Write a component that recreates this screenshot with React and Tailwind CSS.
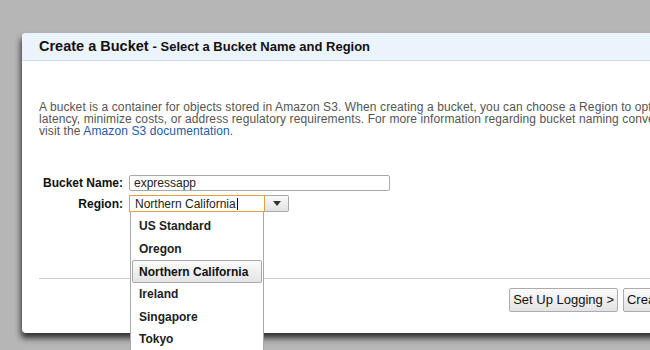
import React from 'react';

const regions = ['US Standard', 'Oregon', 'Northern California', 'Ireland', 'Singapore', 'Tokyo'];

// ── Region dropdown ───────────────────────────────────────────────────────────
function RegionList({ selected }) {
  return (
    <div className="absolute left-[1px] top-[17px] w-[134px] h-[160px] bg-white border border-[#a9a9a9] border-t-0 pt-[3px] px-[1px]">
      {regions.map((r) => (
        <div
          key={r}
          className={
            r === selected
              ? 'h-[23px] flex items-center pl-[6px] border border-[#a8a8a8] rounded-[2px] bg-gradient-to-b from-[#fbfbfb] to-[#e4e4e4] font-bold text-[#111]'
              : 'h-[22.5px] flex items-center pl-[7px] font-bold text-[#222]'
          }
        >
          {r}
        </div>
      ))}
    </div>
  );
}

function Button({ children }) {
  return (
    <button className="h-[24px] px-[3px] border border-[#acacac] rounded-[2px] bg-gradient-to-b from-[#fbfbfb] to-[#e3e3e3] text-[13px] text-[#111] whitespace-nowrap">
      {children}
    </button>
  );
}

// ── Root ──────────────────────────────────────────────────────────────────────
export default function App() {
  return (
    <div
      className="w-[650px] h-[350px] overflow-hidden bg-[#b6b6b6] pt-[33px] pl-[22px]"
      style={{ fontFamily: '"Liberation Sans", Arial, sans-serif' }}
    >
      <div className="w-[665px] h-[300px] bg-white rounded-[4px] shadow-[-1px_5px_6px_rgba(0,0,0,0.75)]">
        <div className="h-[28px] flex items-center pl-[17px] bg-[#ebf3fd] border-b border-[#c9dcf2] rounded-t-[4px] font-bold text-[#111] whitespace-nowrap">
          <span className="text-[14.5px]">Create a Bucket</span>
          <span className="text-[13px] ml-[4px]">- Select a Bucket Name and Region</span>
        </div>

        <div className="px-[17px]">
          <p className="mt-[40px] text-[12px] leading-[12px] tracking-[0.1px] text-[#555] whitespace-nowrap">
            A bucket is a container for objects stored in Amazon S3. When creating a bucket, you can choose a Region to optimize for
            <br />
            latency, minimize costs, or address regulatory requirements. For more information regarding bucket naming conventions, please
            <br />
            visit the <span className="text-[#1c5aa6]">Amazon S3 documentation</span>.
          </p>

          <div className="mt-[38px] flex flex-col gap-[4px] text-[12px] leading-none h-[103px]">
            <div className="flex items-center">
              <label className="w-[84px] text-right font-bold text-[#111]">Bucket Name:</label>
              <div className="ml-[6px] w-[261px] h-[16px] border border-[#a9a9a9] rounded-[2px] pl-[4px] flex items-center text-[#222]">
                expressapp
              </div>
            </div>
            <div className="flex items-center">
              <label className="w-[84px] text-right font-bold text-[#111]">Region:</label>
              <div className="ml-[6px] relative flex">
                <div className="w-[136px] h-[17px] border border-[#e5a13c] pl-[5px] flex items-center text-[#222]">
                  Northern California
                  <span className="inline-block w-[1px] h-[12px] bg-black ml-[1px]" />
                </div>
                <div className="w-[24px] h-[17px] border border-l-0 border-[#a9a9a9] rounded-r-[2px] bg-gradient-to-b from-[#fafafa] to-[#e2e2e2] flex items-center justify-center">
                  <svg width="8" height="5" viewBox="0 0 8 5">
                    <path d="M0 0 L8 0 L4 5 Z" fill="#333" />
                  </svg>
                </div>
                <RegionList selected="Northern California" />
              </div>
            </div>
          </div>

          <div className="border-t border-[#cfcfcf]" />

          <div className="flex justify-end gap-[5px] mt-[9px]">
            <Button>Set Up Logging &gt;</Button>
            <Button>Create</Button>
          </div>
        </div>
      </div>
    </div>
  );
}
